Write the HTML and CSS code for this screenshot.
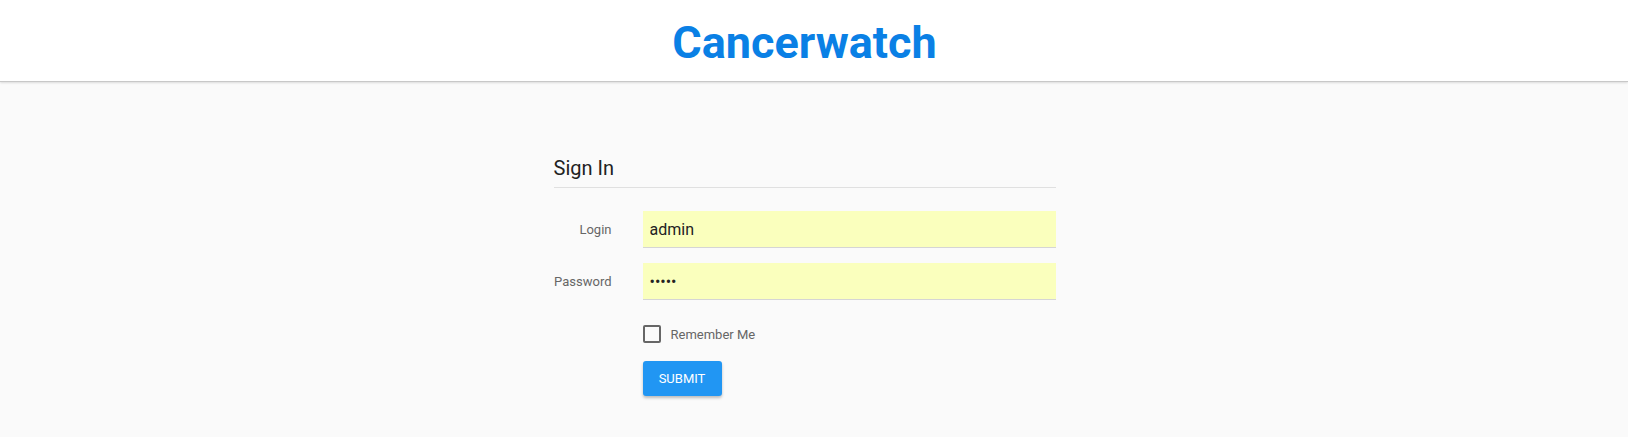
FILE: index.html
```html
<!DOCTYPE html>
<html lang="en">
<head>
<meta charset="utf-8">
<title>Cancerwatch</title>
<link rel="stylesheet" href="styles.css">
</head>
<body>
<header class="topbar">
  <h1 class="brand">Cancerwatch</h1>
</header>
<main class="main">
  <form class="signin">
    <h2 class="signin-title">Sign In</h2>
    <div class="row">
      <label class="label" for="login">Login</label>
      <input class="field" id="login" type="text" value="admin">
    </div>
    <div class="row">
      <label class="label" for="password">Password</label>
      <input class="field" id="password" type="password" value="admin">
    </div>
    <div class="row row-check">
      <span class="label"></span>
      <label class="check"><span class="box"></span><span class="check-text">Remember Me</span></label>
    </div>
    <div class="row row-btn">
      <span class="label"></span>
      <button class="submit" type="button">SUBMIT</button>
    </div>
  </form>
</main>
</body>
</html>
```

FILE: styles.css
```css
html, body {
  margin: 0;
  padding: 0;
  height: 100%;
}
body {
  background: #fafafa;
  font-family: Roboto, "Liberation Sans", Arial, sans-serif;
  padding-right: 19px;
}
.topbar {
  background: #fff;
  height: 81px;
  border-bottom: 1px solid #c8c8c8;
  box-shadow: 0 1px 2px rgba(0,0,0,0.12);
  margin-right: -19px;
  padding-right: 19px;
  display: flex;
  align-items: center;
  justify-content: center;
}
.brand {
  margin: 0;
  font-size: 45px;
  font-weight: 700;
  color: #0a80e5;
  line-height: 1;
  padding-top: 4px;
}
.main {
  display: flex;
  justify-content: center;
  padding-top: 74px;
}
.signin {
  width: 502px;
  display: flex;
  flex-direction: column;
}
.signin-title {
  margin: 0;
  font-size: 20px;
  font-weight: 400;
  color: #222;
  line-height: 24px;
  padding-bottom: 7px;
  border-bottom: 1px solid #e0e0e0;
  margin-bottom: 23px;
}
.row {
  display: flex;
  align-items: center;
  gap: 31px;
  margin-bottom: 15px;
}
.label {
  width: 58px;
  flex: none;
  text-align: right;
  font-size: 13px;
  color: #666;
}
.field {
  flex: 1;
  height: 36px;
  box-sizing: content-box;
  border: 0;
  border-bottom: 1px solid #d5d5d5;
  background: rgb(250,255,189);
  padding: 0 7px;
  font-family: Roboto, "Liberation Sans", Arial, sans-serif;
  font-size: 16px;
  color: #222;
  outline: none;
  margin: 0;
}
.row-check {
  margin-top: 10px;
  margin-bottom: 18px;
}
.check {
  display: flex;
  align-items: center;
  gap: 10px;
  font-size: 13px;
  color: #666;
}
.box {
  width: 14px;
  height: 14px;
  border: 2px solid #666;
  border-radius: 2px;
}
.submit {
  width: 79px;
  height: 35px;
  border: 0;
  border-radius: 3px;
  background: #2196f3;
  color: #fff;
  font-family: Roboto, "Liberation Sans", Arial, sans-serif;
  font-size: 13px;
  font-weight: 400;
  box-shadow: 0 2px 3px rgba(0,0,0,0.25);
  padding: 0;
}
```
